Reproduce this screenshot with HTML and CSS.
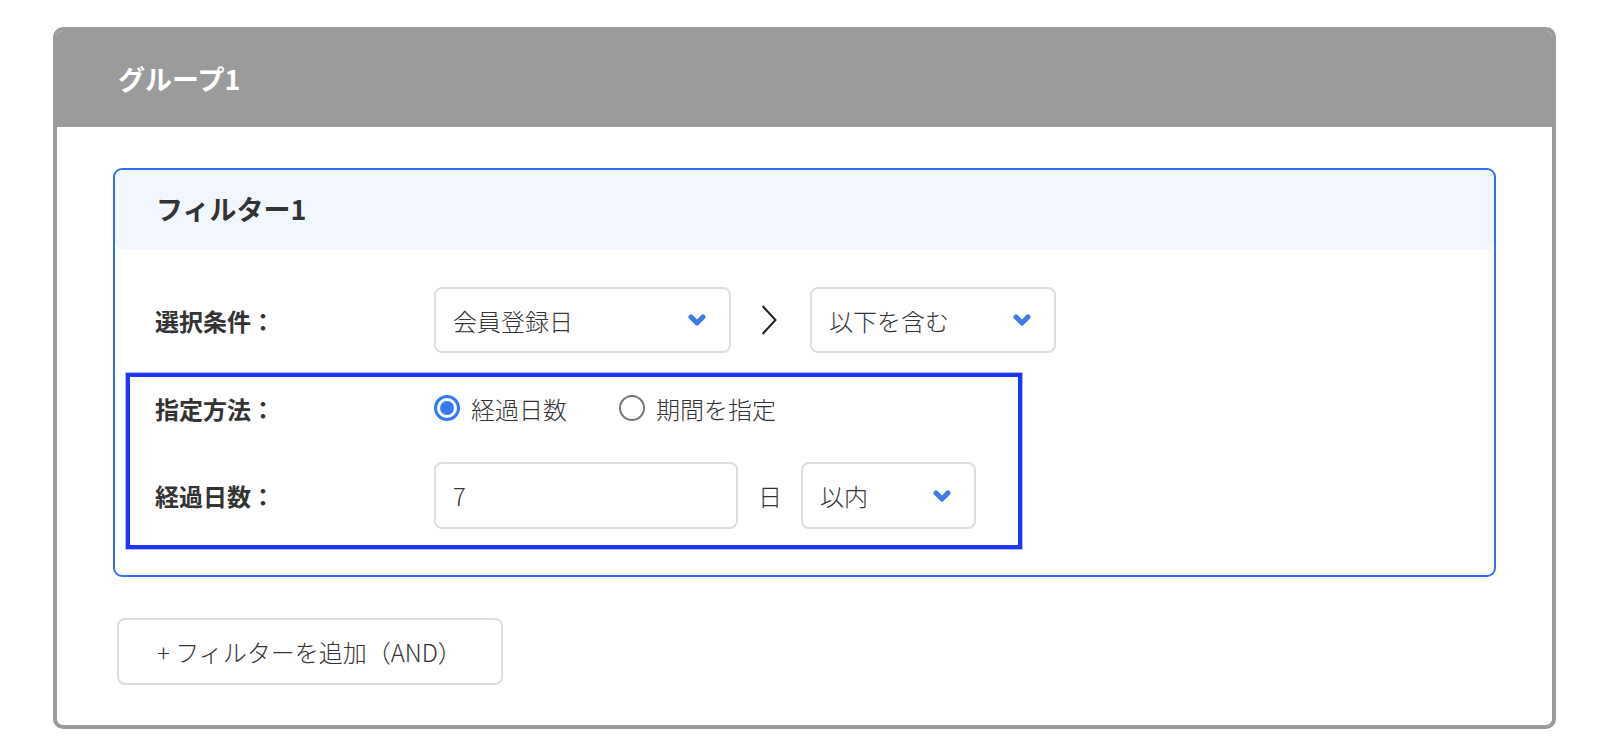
FILE: index.html
```html
<!DOCTYPE html>
<html lang="ja">

<head>
    <meta charset="UTF-8">
    <meta name="viewport" content="width=device-width, initial-scale=1.0">
    <title>グループ設定</title>
    <link rel="stylesheet" href="styles.css">
</head>

<body>
    <div class="group">
        <div class="group-header">グループ1</div>
        <div class="group-body">
            <div class="filter">
                <div class="filter-header">フィルター1</div>
                <div class="filter-body">
                    <div class="row row-select">
                        <div class="row-label">選択条件：</div>
                        <div class="select select-field">
                            <span>会員登録日</span>
                            <svg class="chevron" viewBox="0 0 18 12"><polyline points="3,3 9,9 15,3" /></svg>
                        </div>
                        <svg class="arrow" viewBox="0 0 16 30"><polyline points="1.5,1 14.5,15 1.5,29" /></svg>
                        <div class="select select-op">
                            <span>以下を含む</span>
                            <svg class="chevron" viewBox="0 0 18 12"><polyline points="3,3 9,9 15,3" /></svg>
                        </div>
                    </div>
                    <div class="highlight">
                        <div class="row row-method">
                            <div class="row-label">指定方法：</div>
                            <label class="radio checked"><i class="radio-mark"></i>経過日数</label>
                            <label class="radio"><i class="radio-mark"></i>期間を指定</label>
                        </div>
                        <div class="row row-days">
                            <div class="row-label">経過日数：</div>
                            <input class="days-input" type="text" value="7">
                            <span class="unit">日</span>
                            <div class="select select-range">
                                <span>以内</span>
                                <svg class="chevron" viewBox="0 0 18 12"><polyline points="3,3 9,9 15,3" /></svg>
                            </div>
                        </div>
                    </div>
                </div>
            </div>
            <button class="add-btn">+ フィルターを追加（AND）</button>
        </div>
    </div>
</body>

</html>
```

FILE: styles.css
```css
* {
    padding: 0;
    margin: 0;
    box-sizing: border-box;
}

body {
    font-family: "Noto Sans CJK JP", "Noto Sans", sans-serif;
    font-weight: 300;
    color: #333;
    background-color: #fff;
    padding: 27px 0 0 53px;
}

.group {
    width: 1503px;
    border: 4px solid #9b9b9b;
    border-radius: 10px;
    overflow: hidden;
}

.group-header {
    height: 96px;
    background-color: #9b9b9b;
    color: #fff;
    font-size: 27px;
    font-weight: bold;
    padding: 29px 0 0 61px;
    line-height: 38px;
}

.group-body {
    padding: 41px 56px 40px;
}

.filter {
    border: 2px solid #2f6ff0;
    border-radius: 9px;
}

.filter-header {
    height: 80px;
    background-color: #f2f7fe;
    border-radius: 8px;
    font-size: 27px;
    font-weight: bold;
    padding: 20px 0 0 41px;
    line-height: 38px;
}

.filter-body {
    padding: 37px 40px 26px;
}

.row {
    display: flex;
    align-items: center;
}

.row-label {
    width: 279px;
    flex-shrink: 0;
    font-size: 24px;
    font-weight: bold;
}

.select {
    height: 66px;
    display: flex;
    align-items: center;
    justify-content: space-between;
    padding: 0 23px 0 17px;
    border: 2px solid #dddddd;
    border-radius: 8px;
    font-size: 24px;
    background-color: #fff;
}

.select-field {
    width: 297px;
}

.select-op {
    width: 246px;
}

.select-range {
    width: 175px;
    height: 67px;
}

.chevron {
    width: 18px;
    height: 12px;
    fill: none;
    stroke: #3d7be8;
    stroke-width: 5;
    stroke-linecap: round;
    stroke-linejoin: round;
}

.arrow {
    width: 16px;
    height: 30px;
    margin: 0 33px 0 30px;
    fill: none;
    stroke: #222;
    stroke-width: 2;
}

/* highlighted block */

.highlight {
    width: 896px;
    margin: 20px 0 0 -29px;
    padding: 4px 0 16px 25px;
    border: 4px solid #1937f5;
    box-shadow: 0 0 0 1px rgba(25, 55, 245, 0.35);
}

.row-method {
    height: 54px;
}

.radio {
    display: flex;
    align-items: center;
    font-size: 24px;
    margin-right: 52px;
}

.radio-mark {
    width: 26px;
    height: 26px;
    border-radius: 50%;
    border: 2px solid #767676;
    margin-right: 11px;
    position: relative;
}

.radio.checked .radio-mark {
    border: 3px solid #3478f2;
}

.radio.checked .radio-mark::after {
    content: '';
    position: absolute;
    top: 3px;
    left: 3px;
    width: 14px;
    height: 14px;
    border-radius: 50%;
    background-color: #3478f2;
}

.row-days {
    margin-top: 27px;
}

.days-input {
    width: 304px;
    height: 67px;
    border: 2px solid #dddddd;
    border-radius: 8px;
    padding: 0 17px;
    font-family: inherit;
    font-weight: 300;
    font-size: 24px;
    color: #333;
}

.unit {
    font-size: 24px;
    margin: 0 19px 0 20px;
}

.add-btn {
    width: 386px;
    height: 67px;
    margin: 41px 0 0 4px;
    padding: 0 0 0 38px;
    text-align: left;
    border: 2px solid #dddddd;
    border-radius: 8px;
    background-color: #fff;
    font-family: inherit;
    font-weight: 300;
    font-size: 24px;
    color: #333;
    cursor: pointer;
}
```
